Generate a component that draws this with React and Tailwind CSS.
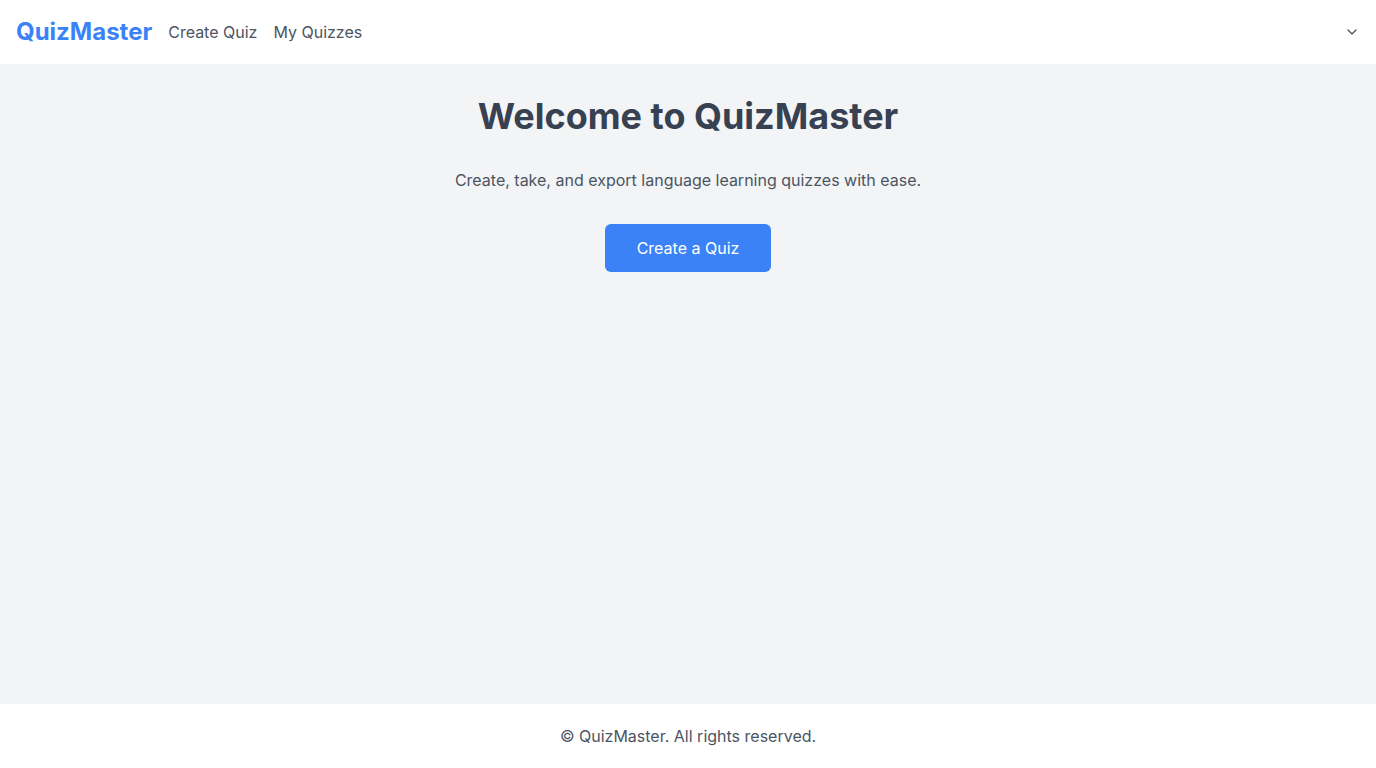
import { ChevronDown } from "lucide-react";

export default function App() {
  return (
    <div className="min-h-screen flex flex-col bg-[#f3f4f6] font-['Inter',sans-serif]">
      <header className="h-16 bg-white flex items-center justify-between px-4">
        <div className="flex items-center gap-4">
          <a href="#" className="text-2xl font-bold text-[#3b82f6]">
            QuizMaster
          </a>
          <nav className="flex items-center gap-4">
            <a href="#" className="text-base text-[#4b5563]">
              Create Quiz
            </a>
            <a href="#" className="text-base text-[#4b5563]">
              My Quizzes
            </a>
          </nav>
        </div>
        <button className="text-[#4b5563]">
          <ChevronDown className="w-4 h-4" strokeWidth={2} />
        </button>
      </header>

      <main className="flex-1 flex flex-col items-center pt-8">
        <h1 className="text-4xl font-bold text-[#374151]">Welcome to QuizMaster</h1>
        <p className="mt-8 text-base text-[#4b5563]">
          Create, take, and export language learning quizzes with ease.
        </p>
        <button className="mt-8 bg-[#3b82f6] text-white text-base px-8 py-3 rounded-md">
          Create a Quiz
        </button>
      </main>

      <footer className="h-16 bg-white flex items-center justify-center">
        <p className="text-base text-[#4b5563]">© QuizMaster. All rights reserved.</p>
      </footer>
    </div>
  );
}
